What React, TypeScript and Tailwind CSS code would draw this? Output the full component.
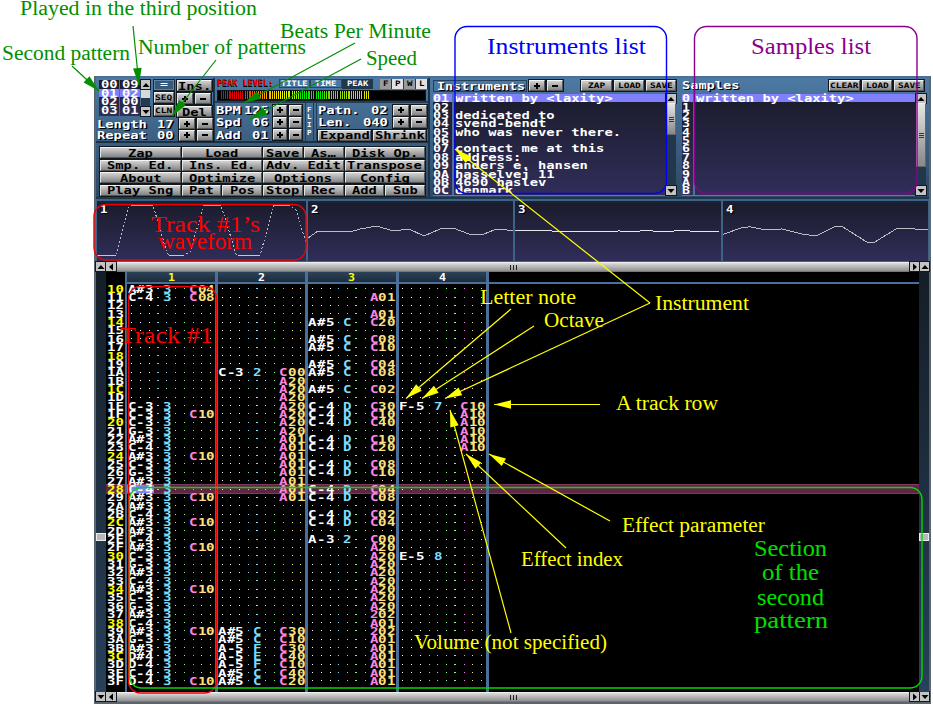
import React from "react";

const MONO = "font-['DejaVu_Sans_Mono','Liberation_Mono',monospace] font-bold";

function Px({ t, s = 10, p = 8.3, className = "" }: { t: string; s?: number; p?: number; className?: string }) {
  const w = t.length * p;
  return (
    <span className={`block shrink-0 whitespace-pre leading-[0.8] ${MONO} ${className}`} style={{ width: w, fontSize: s }}>
      <span className="block w-max origin-left" style={{ transform: `translateY(${s > 9 ? 0.9 : 0.4}px) scaleX(${w / (t.length * s * 0.602)})` }}>
        {t}
      </span>
    </span>
  );
}

const BEVEL =
  "border border-t-[#f4f4f4] border-l-[#e4e4e4] border-b-[#555] border-r-[#555] bg-linear-to-b from-[#d2d2d2] to-[#858585] outline outline-[#101820]";

function Btn({ t, className = "", small = false }: { t: string; className?: string; small?: boolean }) {
  return (
    <div className={`flex shrink-0 items-center justify-center text-black ${BEVEL} ${className}`}>
      {t === "+" || t === "-" ? (
        <span className="relative block h-[2px] w-[6px] bg-black">
          {t === "+" && <span className="absolute -top-[2px] left-[2px] h-[6px] w-[2px] bg-black" />}
        </span>
      ) : small ? (
        <Px t={t} s={7.5} p={5.7} />
      ) : (
        <Px t={t} />
      )}
    </div>
  );
}

function Tri({ d, className = "h-[9px] w-[9px]" }: { d: "u" | "d" | "l" | "r"; className?: string }) {
  const pts = { u: "0.5,6 4,2 7.5,6", d: "0.5,2 4,6 7.5,2", l: "6,0.5 2,4 6,7.5", r: "2,0.5 6,4 2,7.5" }[d];
  return (
    <div className={`flex shrink-0 items-center justify-center bg-[#c4c4c4] outline outline-[#101820] ${className}`}>
      <svg className="h-2 w-2" viewBox="0 0 8 8">
        <polygon points={pts} fill="#000" />
      </svg>
    </div>
  );
}

function PlusMinus({ className = "" }: { className?: string }) {
  return (
    <div className={`flex gap-[2px] ${className}`}>
      <Btn t="+" className="h-[11px] w-[16px]" />
      <Btn t="-" className="h-[11px] w-[16px]" />
    </div>
  );
}

const LIST_BG = "bg-linear-to-b from-[#1b1b2c] to-[#302e5a]";
const SHADOW = "[text-shadow:1px_1px_0_#000]";

function OrderList({ items }: { items: string[] }) {
  return (
    <div className={`flex h-[36px] w-[20px] flex-col text-white ${LIST_BG}`}>
      {items.map((v, i) => (
        <div key={i} className={`flex h-[8.5px] shrink-0 items-center pl-[1.5px] ${i === 1 ? "bg-[#8080ff]" : ""}`}>
          <Px t={v} />
        </div>
      ))}
    </div>
  );
}

function SongPanel() {
  return (
    <div className="flex h-[65px] w-[119px] flex-col border-r-2 border-b-2 border-r-[#1c3046] border-b-[#1c3046] pt-[2px] pl-[3px] text-white">
      <div className="flex h-[37px]">
        <div className="flex w-[51px] gap-[1px]">
          <OrderList items={["00", "01", "02", "03"]} />
          <OrderList items={["09", "02", "00", "01"]} />
          <div className="flex h-[36px] w-[9px] flex-col justify-between bg-[#243a50]">
            <Tri d="u" />
            <div className="mt-[1px] mb-auto h-[8px] bg-[#d8d8d8]" />
            <Tri d="d" />
          </div>
        </div>
        <div className="ml-[4px] flex w-[20px] flex-col gap-[2px]">
          <div className="flex h-[10px] items-center justify-center border border-[#5d86ad] bg-[#385878] outline outline-[#182838]"><Px t="=" s={9} p={8} /></div>
          <Btn t="SEQ" small className="h-[11px]" />
          <Btn t="CLN" small className="h-[11px]" />
        </div>
        <div className="ml-[3px] flex w-[35px] flex-col gap-[2px]">
          <Btn t="Ins." className="h-[11px]" />
          <PlusMinus />
          <Btn t="Del" className="h-[11px]" />
        </div>
      </div>
      <div className="mt-[1px] flex h-[12px] items-center justify-between">
        <Px t="Length" className={`-ml-[2px] ${SHADOW}`} />
        <Px t="17" className={`ml-auto mr-[5px] ${SHADOW}`} />
        <PlusMinus />
      </div>
      <div className="flex h-[13px] items-center justify-between">
        <Px t="Repeat" className={`-ml-[2px] ${SHADOW}`} />
        <Px t="00" className={`ml-auto mr-[5px] ${SHADOW}`} />
        <PlusMinus />
      </div>
    </div>
  );
}

function Tempo({ label, value }: { label: string; value: string }) {
  return (
    <div className="flex h-[12.4px] items-center">
      <Px t={label} className={`-ml-[1px] ${SHADOW}`} />
      <Px t={value} className={`ml-auto mr-[4px] ${SHADOW}`} />
      <div className="flex gap-[2px]">
        <Btn t="+" className="h-[11px] w-[14px]" />
        <Btn t="-" className="h-[11px] w-[13px]" />
      </div>
    </div>
  );
}

function MeterPanel() {
  return (
    <div className="flex h-[65px] w-[213px] flex-col border-b-2 border-[#1c3046] text-white">
      <div className="flex h-[12px] items-center pl-[2px]">
        <Px t="PEAK LEVEL:" s={8} p={5.1} className="text-[#ff0000] [text-shadow:0_1px_0_#000]" />
        <div className="ml-[6px] flex h-[9px] w-[31px] items-center justify-center border border-[#2c4763]"><Px t="TITLE" s={7.5} p={5.3} /></div>
        <div className="flex h-[9px] w-[32px] items-center justify-center border border-[#2c4763]"><Px t="TIME" s={7.5} p={5.3} /></div>
        <div className="flex h-[10px] w-[31px] items-center justify-center bg-[#22384f]"><Px t="PEAK" s={7.5} p={5.3} /></div>
        <div className="ml-[7px] flex text-black">
          {["F", "P", "W", "L"].map((c, i) => (
            <div key={c} className={`flex h-[10px] w-[12px] items-center justify-center border-r border-[#333] ${i % 2 ? "bg-[#e2e2e2]" : "bg-[#9a9a9a]"}`}>
              <Px t={c} s={7.5} p={5.5} />
            </div>
          ))}
        </div>
      </div>
      <div className="ml-[2px] flex h-[11px] w-[209px] items-center border border-[#101820] bg-black pl-[3px]">
        {Array.from({ length: 75 }, (_, i) => (
          <i
            key={i}
            className="h-[8px] w-px shrink-0"
            style={{ marginRight: i % 12 === 11 ? 2 : 0.9, backgroundColor: i < 12 ? "#e80000" : i < 40 ? `hsl(${10 + (i - 12) * 2.8} 95% 50%)` : i < 52 ? "#00f000" : `hsl(${95 - (i - 52) * 1.6} 95% 45%)` }}
          />
        ))}
      </div>
      <div className="flex grow border-t-2 border-[#243c55]">
        <div className="flex w-[87px] flex-col pt-[1px] pl-[2px]">
          <Tempo label="BPM" value="125" />
          <Tempo label="Spd" value="06" />
          <Tempo label="Add" value="01" />
        </div>
        <div className="ml-[3px] flex w-[9px] flex-col items-center justify-center gap-[2px] border-x border-[#243c55]">
          {["F", "L", "I", "P"].map((c) => (
            <Px key={c} t={c} s={7} p={4.5} />
          ))}
        </div>
        <div className="ml-[2px] flex w-[111px] flex-col border-l border-[#243c55] pt-[1px] pl-[1px]">
          {[["Patn.", "02"], ["Len.", "040"]].map(([a, b]) => (
            <div key={a} className="flex h-[12.4px] items-center">
              <Px t={a} className={SHADOW} />
              <Px t={b} className={`ml-auto mr-[5px] ${SHADOW}`} />
              <PlusMinus />
            </div>
          ))}
          <div className="mt-[1px] flex gap-[2px]">
            <Btn t="Expand" className="h-[11px] w-[53px]" />
            <Btn t="Shrink" className="h-[11px] w-[53px]" />
          </div>
        </div>
      </div>
    </div>
  );
}

function Commands() {
  const rows: [string, string][][] = [
    [["Zap", "col-span-4"], ["Load", "col-span-4"], ["Save", "col-span-2"], ["As…", "col-span-2"], ["Disk Op.", "col-span-4"]],
    [["Smp. Ed.", "col-span-4"], ["Ins. Ed.", "col-span-4"], ["Adv. Edit", "col-span-4"], ["Transpose", "col-span-4"]],
    [["About", "col-span-4"], ["Optimize", "col-span-4"], ["Options", "col-span-4"], ["Config", "col-span-4"]],
    [["Play Sng", "col-span-4"], ["Pat", "col-span-2"], ["Pos", "col-span-2"], ["Stop", "col-span-2"], ["Rec", "col-span-2"], ["Add", "col-span-2"], ["Sub", "col-span-2"]],
  ];
  return (
    <div className="mt-[4px] ml-[4px] grid w-[325px] grid-cols-16 gap-x-[1px] gap-y-[1.5px]">
      {rows.flat().map(([t, c], i) => (
        <Btn key={i} t={t} className={`h-[11px] ${c}`} />
      ))}
    </div>
  );
}

const INSTR = ["written by <laxity>", "", "dedicated to", "svend-bendt", "who was never there.", "", "contact me at this", "address:", "anders e. hansen", "hasselvej 11", "4690 haslev", "denmark"];

function NameList({ nums, names, numClass, thumb }: { nums: string[]; names: string[]; numClass: string; thumb: string }) {
  return (
    <div className="flex h-[102px] border-b border-[#5580a8]">
      <div className={`flex flex-col border-r-2 border-[#4a7198] text-white ${numClass} ${LIST_BG}`}>
        {nums.map((n, i) => (
          <div key={n} className={`flex h-[8.38px] shrink-0 items-center ${i === 0 ? "bg-[#8080ff]" : ""}`}><Px t={n} p={8} /></div>
        ))}
      </div>
      <div className={`flex grow flex-col text-white ${LIST_BG}`}>
        {names.map((n, i) => (
          <div key={i} className={`flex h-[8.38px] shrink-0 items-center pl-[1px] ${i === 0 ? "bg-[#8080ff]" : ""}`}>{n && <Px t={n} />}</div>
        ))}
      </div>
      <div className="flex w-[10px] flex-col bg-[#22374b]">
        <Tri d="u" className="h-[9px] w-[10px]" />
        <div className={`flex flex-col items-center justify-center gap-[1px] border border-[#eee] border-r-[#666] border-b-[#666] bg-linear-to-b from-[#e6e6e6] to-[#888] ${thumb}`}>
          <i className="h-px w-[5px] bg-[#333]" /><i className="h-px w-[5px] bg-[#333]" /><i className="h-px w-[5px] bg-[#333]" />
        </div>
        <Tri d="d" className="mt-auto h-[9px] w-[10px]" />
      </div>
    </div>
  );
}

function Instruments() {
  return (
    <div className="flex w-[249px] flex-col pt-[2px] pr-[3px] pl-[3px]">
      <div className="flex h-[14px] items-start gap-[2px]">
        <div className="flex h-[12px] w-[94px] items-center border border-[#24405c] pl-[3px] text-white"><Px t="Instruments" p={8} className={SHADOW} /></div>
        <Btn t="+" className="h-[11px] w-[16px]" />
        <Btn t="-" className="h-[11px] w-[16px]" />
        <Btn t="ZAP" small className="ml-auto h-[11px] w-[31px]" />
        <Btn t="LOAD" small className="h-[11px] w-[30px]" />
        <Btn t="SAVE" small className="h-[11px] w-[30px]" />
      </div>
      <NameList nums={["01", "02", "03", "04", "05", "06", "07", "08", "09", "0A", "0B", "0C"]} names={INSTR} numClass="w-[21px]" thumb="h-[32px]" />
    </div>
  );
}

function Samples() {
  return (
    <div className="flex w-[248px] flex-col pt-[2px] pl-[3px] pr-[1px]">
      <div className="flex h-[14px] items-start gap-[2px] text-white">
        <div className="flex h-[10px] items-center"><Px t="Samples" p={8.2} className={SHADOW} /></div>
        <Btn t="CLEAR" small className="ml-auto h-[11px] w-[31px]" />
        <Btn t="LOAD" small className="h-[11px] w-[30px]" />
        <Btn t="SAVE" small className="mr-[2px] h-[11px] w-[30px]" />
      </div>
      <NameList nums={"0123456789AB".split("")} names={["written by <laxity>"]} numClass="w-[12.5px]" thumb="h-[64px]" />
    </div>
  );
}

const WAVES: string[] = [
  "0,57.3 19,57.3 32,8.7 34,7.3 56,7.3 70,55 72,57.3 87,57.3 93,54 107,7.3 124,7.3 139,56 141,57.3 163,57.3 177,7.3 192,7.3 199,12 209,45",
  "0,40 10,33 38,33 42,34 52,31 69,28 85,33 101,31 116,38 132,31 145,30 161,36 176,36 186,32 193,31 205,33",
  "0,33 25,32.4 45,33.4 105,33 117,33.6 130,32.6 150,33.6 165,32.6 185,33.4 205,33",
  "0,36.5 19,29.5 27,28.8 41,31.5 59,31 79,36 93,38 112,28.4 120,29 145,44.8 151,44.5 173,31 187,30.6 205,32",
];

function Scopes() {
  return (
    <div className="flex h-[63px] gap-[2px] bg-[#3e6388] pt-[2px] pb-[1px] pl-[1px]">
      {WAVES.map((w, i) => (
        <div key={i} className={`flex text-white ${LIST_BG} border-t-2 border-[#182434] ${i === 0 ? "w-[208.5px]" : "w-[205.5px]"}`}>
          <div className="pt-[2px] pl-[3px]"><Px t={String(i + 1)} p={7.5} className={SHADOW} /></div>
          <svg className="-ml-[10.5px] h-[58px] w-[205px] shrink-0 overflow-visible" viewBox="0 5 205 58">
            <polyline points={w} fill="none" stroke={i === 2 ? "#e8e8e8" : "#bcbcc4"} strokeWidth="1" shapeRendering="crispEdges" strokeDasharray={i === 0 ? "1.8 2.2" : undefined} />
            {i === 0 && <path d="M0 57.3H19M34 7.3H56M72 57.3H87M107 7.3H124M141 57.3H163M177 7.3H192" stroke="#c8c8c8" shapeRendering="crispEdges" />}
          </svg>
        </div>
      ))}
    </div>
  );
}

function HBar({ v }: { v: "u" | "d" }) {
  return (
    <div className="flex h-[10px] gap-[1px] bg-[#333]">
      <Tri d={v} className="h-[9px] w-[9px]" />
      <Tri d="l" className="h-[9px] w-[10px]" />
      <div className="flex grow items-center justify-center gap-[2px] border-y border-t-[#eee] border-b-[#777] bg-linear-to-b from-[#dcdcdc] to-[#909090]">
        <i className="h-[5px] w-px bg-[#222]" /><i className="h-[5px] w-px bg-[#222]" /><i className="h-[5px] w-px bg-[#222]" />
      </div>
      <Tri d="r" className="h-[9px] w-[9px]" />
      <Tri d={v} className="h-[9px] w-[9px]" />
    </div>
  );
}

type Cell = [string, string, string];
const T1: Record<number, Cell> = { 0x10: ["A#3", "3", "C04"], 0x11: ["C-4", "3", "C08"] };
"C-3 C-3 C-3 G-3 A#3 C-4 A#3 C-3 G-3 A#3 C-4 A#3 A#3 C-4 A#3 A#3 C-4 A#3 C-3 G-3 A#3 C-4 A#3 C-3 G-3 A#3 C-4 A#3 G-3 A#3 D#4 D-4 C-4 D-4"
  .split(" ")
  .forEach((n, i) => {
    const r = 0x1e + i;
    T1[r] = [n, "3", [0x1f, 0x24, 0x29, 0x2c, 0x2f, 0x34, 0x39, 0x3f].includes(r) ? "C10" : ""];
  });
const T2: Record<number, Cell> = {
  0x1a: ["C-3", "2", "C00"], 0x39: ["A#5", "C", "C30"], 0x3a: ["A#5", "C", "C10"], 0x3b: ["A-5", "F", "C30"],
  0x3c: ["A-5", "E", "C40"], 0x3d: ["A-5", "F", "C10"], 0x3e: ["A#5", "C", "C40"], 0x3f: ["A#5", "C", "C20"],
};
for (let r = 0x1b; r <= 0x29; r++) T2[r] = ["", "", r < 0x22 ? "A20" : "A01"];
const T3: Record<number, Cell> = {
  0x11: ["", "", "A01"], 0x13: ["", "", "A01"], 0x14: ["A#5", "C", "C20"], 0x16: ["A#5", "C", "C08"], 0x17: ["A#5", "C", "C10"],
  0x19: ["A#5", "C", "C04"], 0x1a: ["A#5", "C", "C08"], 0x1c: ["A#5", "C", "C02"], 0x1e: ["C-4", "D", "C30"], 0x1f: ["C-4", "D", "C10"],
  0x20: ["C-4", "D", "C40"], 0x22: ["C-4", "D", "C10"], 0x23: ["C-4", "D", "C20"], 0x25: ["C-4", "D", "C08"], 0x26: ["C-4", "D", "C10"],
  0x28: ["C-4", "D", "C04"], 0x29: ["C-4", "D", "C08"], 0x2b: ["C-4", "D", "C02"], 0x2c: ["C-4", "D", "C04"], 0x2e: ["A-3", "2", "C00"],
};
for (let r = 0x2f; r <= 0x3f; r++) T3[r] = ["", "", r < 0x37 ? "A20" : r === 0x37 || r === 0x39 ? "202" : "A01"];
const T4: Record<number, Cell> = { 0x1e: ["F-5", "7", "C10"], 0x30: ["E-5", "8", ""] };
for (let r = 0x1f; r <= 0x23; r++) T4[r] = ["", "", "A10"];
const TRACKS = [T1, T2, T3, T4];
const ROWS = Array.from({ length: 48 }, (_, i) => 16 + i);
const COLORS = ["text-white", "text-white", "text-white", "text-[#7cdcff]", "text-[#7cdcff]", "text-[#84f884]", "text-[#84f884]", "text-[#ff84e0]", "text-[#ffe080]", "text-[#ffe080]"];

function Track({ data, idx }: { data: Record<number, Cell>; idx: number }) {
  return (
    <div className="w-[90.4px] shrink-0 border-r-[3px] border-[#4a709a]">
      <div className="flex h-[12px] items-center justify-center border-b-2 border-[#4a709a] bg-linear-to-b from-[#2c4258] to-[#1c2c3c]">
        <Px t={String(idx + 1)} p={7} className={idx % 2 ? "text-white" : "text-[#ffff00]"} />
      </div>
      <div className="h-[0.6px]" />
      {ROWS.map((r) => {
        const [n, s, e] = data[r] || ["", "", ""];
        const chars = (n || "   ") + " " + (s || " ") + "  " + (e || "   ");
        return (
          <div key={r} className="flex h-[8.35px] w-[87.4px] items-center">
            {chars.split("").map((c, k) => (
              <span key={k} className={`flex h-[8.35px] w-[8.76px] shrink-0 items-center justify-center ${COLORS[k]} ${r === 0x28 && idx === 0 && k < 3 ? "bg-[#8080ff]" : ""}`}>
                {c === " " ? <i className={`h-px bg-current ${k === idx + 3 ? "w-[2px]" : "w-px"}`} /> : <Px t={c} p={8.5} />}
              </span>
            ))}
          </div>
        );
      })}
    </div>
  );
}

function SideBar({ className = "" }: { className?: string }) {
  return (
    <div className={`flex w-[10px] shrink-0 flex-col bg-linear-to-b from-[#141e28] to-[#28405a] pt-[261px] ${className}`}>
      <div className="h-[8px] border border-[#eee] bg-[#b8b8b8]" />
    </div>
  );
}

function Pattern() {
  return (
    <div className="relative z-0 flex h-[420px] overflow-hidden bg-black">
      <SideBar />
      <div className="flex w-[19px] shrink-0 flex-col pt-[12.6px] pl-[1px]">
        {ROWS.map((r) => (
          <div key={r} className="flex h-[8.35px] shrink-0 items-center">
            <Px t={r.toString(16).toUpperCase()} p={8.4} className={r % 4 ? "text-white" : "text-[#ffff00]"} />
          </div>
        ))}
      </div>
      <div className="w-[2.4px] shrink-0 bg-[#4a709a]" />
      {TRACKS.map((t, i) => (
        <Track key={i} data={t} idx={i} />
      ))}
      <div className="h-[12px] grow border-b-2 border-[#4a709a]" />
      <SideBar />
      <div className="absolute top-[212px] right-[10px] left-[10px] -z-10 h-[10px] border-y border-[#803860] bg-[#602444]" />
    </div>
  );
}

const GREEN = "#008f00";
const YEL = "#ffff00";

function Arrow({ a, c = YEL }: { a: number[]; c?: string }) {
  const [x1, y1, x2, y2] = a;
  const ang = (Math.atan2(y2 - y1, x2 - x1) * 180) / Math.PI;
  return (
    <g>
      <line x1={x1} y1={y1} x2={x2} y2={y2} stroke={c} strokeWidth="1.2" />
      <polygon points="0,0 -17,-4.3 -17,4.3" fill={c} transform={`translate(${x2} ${y2}) rotate(${ang})`} />
    </g>
  );
}

const LABELS: [string, number, number, number, string, number][] = [
  ["Played in the third position", 20, 257, 15, GREEN, 20],
  ["Second pattern", 2, 130, 60, GREEN, 20],
  ["Number of patterns", 138, 306, 54, GREEN, 20],
  ["Beats Per Minute", 280, 431, 38, GREEN, 20],
  ["Speed", 366, 417, 65, GREEN, 20],
  ["Instruments list", 487, 646, 54, "#0000ff", 23],
  ["Samples list", 751, 871, 54, "#8b008b", 23],
  ["Track #1’s", 151, 260, 232, "#ff0000", 24],
  ["waveform", 158, 252, 249, "#ff0000", 24],
  ["Track #1", 120, 213, 343, "#ff0000", 24],
  ["Letter note", 480, 576, 304, YEL, 20],
  ["Octave", 544, 604, 327, YEL, 20],
  ["Instrument", 655, 749, 310, YEL, 20],
  ["A track row", 616, 718, 410, YEL, 20],
  ["Effect parameter", 622, 765, 532, YEL, 20],
  ["Effect index", 521, 623, 566, YEL, 20],
  ["Volume (not specified)", 414, 607, 649, YEL, 20],
  ["Section", 754, 827, 556, "#00e000", 24],
  ["of the", 762, 819, 580, "#00e000", 24],
  ["second", 757, 824, 605, "#00e000", 24],
  ["pattern", 754, 828, 628, "#00e000", 24],
];

function Annotations() {
  return (
    <svg className="pointer-events-none absolute inset-0 h-[706px] w-[933px] font-['Liberation_Serif',serif]" viewBox="0 0 933 706">
      <g fill="none" strokeWidth="1.4">
        <rect x="455" y="26.5" width="211.5" height="167" rx="12" stroke="#0000ff" />
        <rect x="694.5" y="26.5" width="222.5" height="167" rx="12" stroke="#8b008b" />
        <rect x="94" y="204.5" width="212" height="55.5" rx="12" stroke="#f00000" />
        <rect x="128.5" y="286.5" width="88" height="406.5" rx="12" stroke="#f00000" />
        <rect x="129.5" y="487.5" width="792.5" height="200.5" rx="12" stroke="#00d800" />
      </g>
      {[[133, 26, 139, 85], [72, 66, 99, 91], [216, 60, 172, 116], [355, 43, 244, 103], [361, 59, 250, 119]].map((a, i) => (
        <Arrow key={i} a={a} c={GREEN} />
      ))}
      {[[511, 309, 406, 398.5], [534, 326, 422, 398.5], [650, 303, 445, 398.5], [650, 303, 455, 149], [600, 404.5, 494, 404.5], [610, 521, 489, 454], [566, 548, 466, 454], [511, 633, 450, 410]].map((a, i) => (
        <Arrow key={i} a={a} />
      ))}
      {LABELS.map(([t, x1, x2, y, c, s]) => (
        <text key={t} x={x1} y={y} fill={c} fontSize={s} textLength={x2 - x1} lengthAdjust="spacingAndGlyphs">
          {t}
        </text>
      ))}
    </svg>
  );
}

export default function App() {
  return (
    <div className="relative h-[706px] w-[933px] overflow-hidden bg-white pt-[76px] pl-[94px]">
      <div className="h-[628px] w-[837px] border-r-2 border-b-2 border-l-2 border-[#5c666c]">
        <div className="flex h-[123px] border-t-2 border-b-2 border-t-[#4a7198] border-b-[#22364a] bg-linear-to-b from-[#4d7aa4] to-[#2c4864]">
          <div className="flex w-[334px] flex-col border-r-2 border-[#1c3046]">
            <div className="flex">
              <SongPanel />
              <MeterPanel />
            </div>
            <Commands />
          </div>
          <Instruments />
          <Samples />
        </div>
        <Scopes />
        <HBar v="u" />
        <Pattern />
        <HBar v="d" />
      </div>
      <Annotations />
    </div>
  );
}
